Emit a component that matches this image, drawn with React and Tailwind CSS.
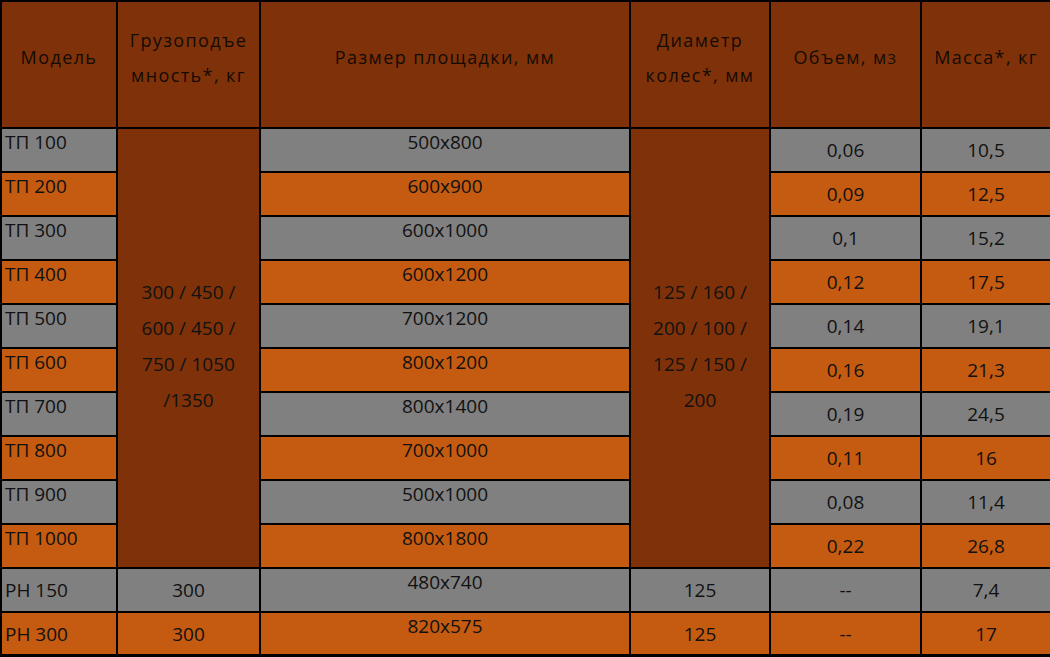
const rows = [
  ["ТП 100", "500x800", "0,06", "10,5"],
  ["ТП 200", "600x900", "0,09", "12,5"],
  ["ТП 300", "600x1000", "0,1", "15,2"],
  ["ТП 400", "600x1200", "0,12", "17,5"],
  ["ТП 500", "700x1200", "0,14", "19,1"],
  ["ТП 600", "800x1200", "0,16", "21,3"],
  ["ТП 700", "800x1400", "0,19", "24,5"],
  ["ТП 800", "700x1000", "0,11", "16"],
  ["ТП 900", "500x1000", "0,08", "11,4"],
  ["ТП 1000", "800x1800", "0,22", "26,8"],
];

const extra = [
  ["РН 150", "300", "480x740", "125", "--", "7,4"],
  ["РН 300", "300", "820x575", "125", "--", "17"],
];

const td = "border-2 border-black text-center";
const head =
  "border-2 border-black bg-[#7f3209] text-center align-middle pb-[14px] font-normal text-[18px] leading-[35px] tracking-[1.4px] text-[#140b05]";

export default function App() {
  return (
    <div
      className="w-[1050px] h-[657px] bg-black text-[19px] text-[#111111]"
      style={{ fontFamily: "'Open Sans', 'Liberation Sans', sans-serif" }}
    >
      <table className="w-[1050px] table-fixed border-collapse">
        <colgroup>
          <col className="w-[116px]" />
          <col className="w-[143px]" />
          <col className="w-[370px]" />
          <col className="w-[140px]" />
          <col className="w-[151px]" />
          <col className="w-[130px]" />
        </colgroup>

        <thead>
          <tr className="h-[127px]">
            <th className={head}>Модель</th>
            <th className={head}>
              Грузоподъе
              <br />
              мность*, кг
            </th>
            <th className={head}>Размер площадки, мм</th>
            <th className={head}>
              Диаметр
              <br />
              колес*, мм
            </th>
            <th className={head}>
              Объем, м<span className="text-[15px]">3</span>
            </th>
            <th className={head}>Масса*, кг</th>
          </tr>
        </thead>

        <tbody className="leading-[26px]">
          {rows.map((r, i) => {
            const bg = i % 2 === 0 ? "bg-[#808080]" : "bg-[#c55a11]";
            return (
              <tr key={r[0]} className="h-[44px]">
                <td className={`border-2 border-black ${bg} align-top pl-[3px] text-left`}>
                  {r[0]}
                </td>

                {i === 0 && (
                  <td
                    rowSpan={10}
                    className={`${td} bg-[#7f3209] align-middle leading-[36px] pb-[4px]`}
                  >
                    300 / 450 /
                    <br />
                    600 / 450 /
                    <br />
                    750 / 1050
                    <br />
                    /1350
                  </td>
                )}

                <td className={`${td} ${bg} align-top`}>{r[1]}</td>

                {i === 0 && (
                  <td
                    rowSpan={10}
                    className={`${td} bg-[#7f3209] align-middle leading-[36px] pb-[4px]`}
                  >
                    125 / 160 /
                    <br />
                    200 / 100 /
                    <br />
                    125 / 150 /
                    <br />
                    200
                  </td>
                )}

                <td className={`${td} ${bg} align-middle`}>{r[2]}</td>
                <td className={`${td} ${bg} align-middle`}>{r[3]}</td>
              </tr>
            );
          })}

          {extra.map((r, i) => {
            const bg = i === 0 ? "bg-[#808080]" : "bg-[#c55a11]";
            return (
              <tr key={r[0]} className={i === 0 ? "h-[44px]" : "h-[43px]"}>
                <td className={`border-2 border-black ${bg} align-middle pl-[3px] text-left`}>
                  {r[0]}
                </td>
                <td className={`${td} ${bg} align-middle`}>{r[1]}</td>
                <td className={`${td} ${bg} align-top`}>{r[2]}</td>
                <td className={`${td} ${bg} align-middle`}>{r[3]}</td>
                <td className={`${td} ${bg} align-middle`}>{r[4]}</td>
                <td className={`${td} ${bg} align-middle`}>{r[5]}</td>
              </tr>
            );
          })}
        </tbody>
      </table>
    </div>
  );
}
